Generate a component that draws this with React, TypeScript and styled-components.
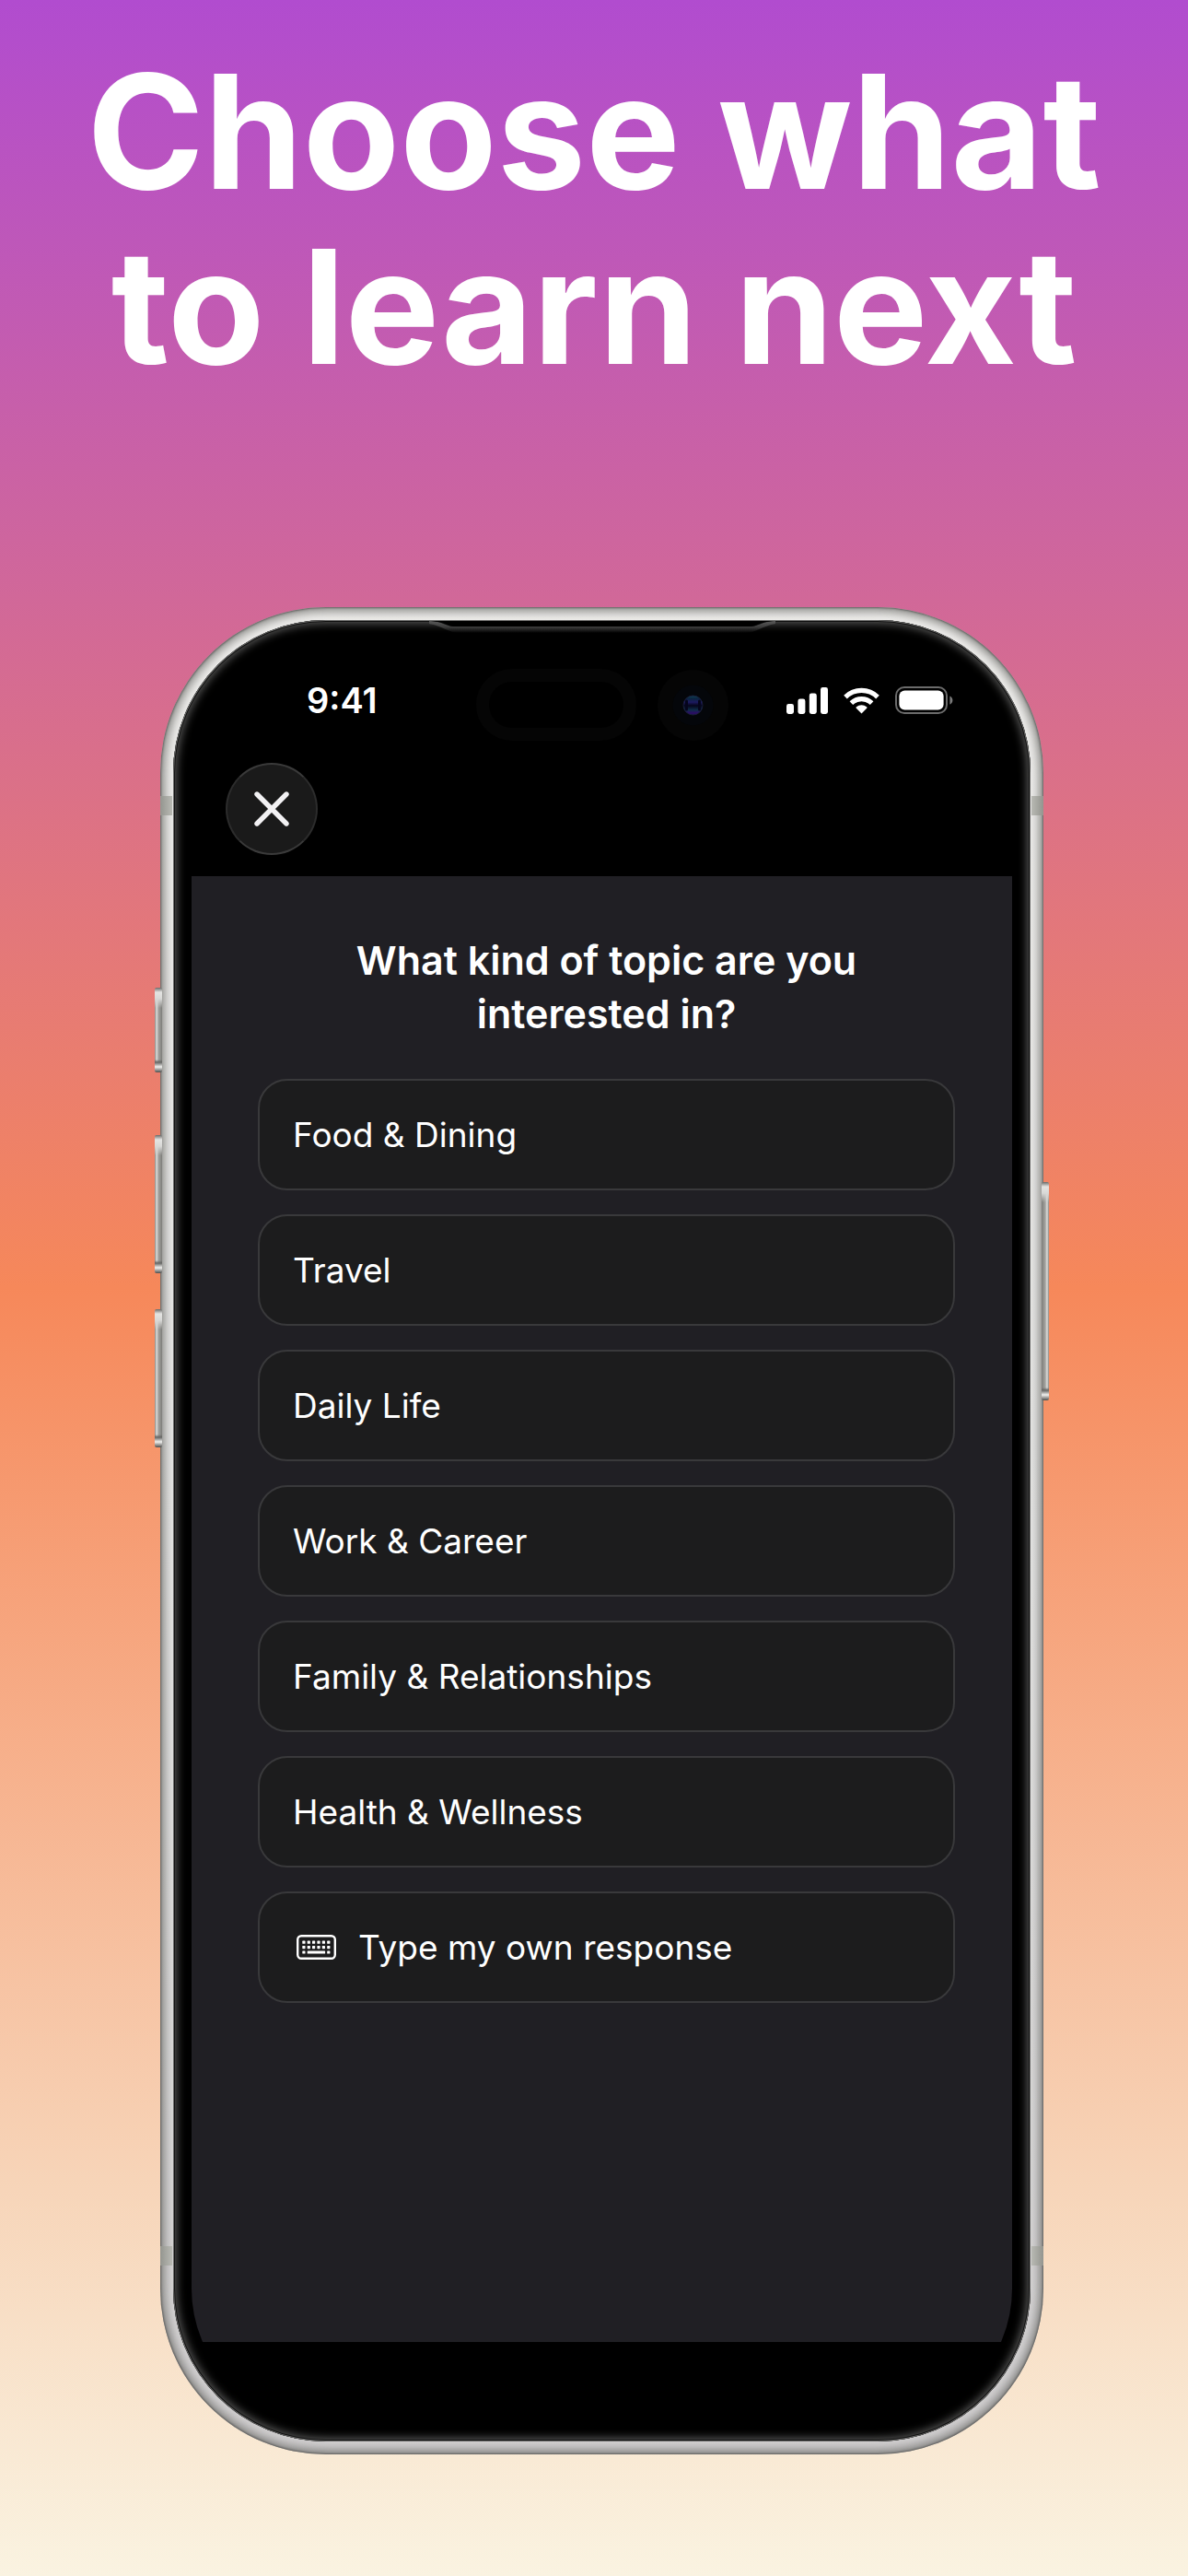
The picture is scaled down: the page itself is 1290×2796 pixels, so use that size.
import React from "react";
import styled, { createGlobalStyle } from "styled-components";

const GlobalStyle = createGlobalStyle`
  *, *::before, *::after { box-sizing: border-box; }
  html { background: #faf3e1; }
  body { margin: 0; }
  button { font: inherit; color: inherit; cursor: pointer; }
`;

const FONT = `Inter, "Liberation Sans", Arial, sans-serif`;

const Page = styled.main`
  display: flex;
  flex-direction: column;
  align-items: center;
  gap: 232px;
  min-height: 100vh;
  padding: 47px 40px 132px;
  overflow: hidden;
  font-family: ${FONT};
  color: #ffffff;
  background: linear-gradient(180deg, #b14ccf 0%, #f6885a 50%, #f7d5b9 85%, #faf3e1 100%);
`;

const Headline = styled.h1`
  margin: 0;
  max-width: 1200px;
  font-size: 172px;
  line-height: 190px;
  font-weight: 700;
  text-align: center;
`;

const Stage = styled.div`
  width: 100%;
  max-width: 976px;
  padding-left: 17px;
`;

const Device = styled.section`
  position: relative;
  width: 100%;
  padding: 14px;
  border-radius: 180px;
  background: linear-gradient(180deg, #f0efed 0%, #e6e6e5 50%, #d2d0d1 100%);
  box-shadow:
    inset 0 0 2px 1px rgba(80, 80, 78, 0.7),
    inset 0 0 12px 4px rgba(96, 96, 92, 0.8);
`;

const Bezel = styled.div`
  position: relative;
  padding: 20px;
  border-radius: 166px;
  background: #000000;
  box-shadow:
    inset 0 0 0 1px #6c6c6b,
    inset 0 0 0 2px #121212,
    inset 0 0 10px 4px #565655;
`;

const Screen = styled.div`
  position: relative;
  overflow: hidden;
  padding-bottom: 88px;
  border-radius: 146px;
  background: #000000;
`;

const SideKey = styled.span<{ $side: "left" | "right"; $top: number; $length: number }>`
  position: absolute;
  top: ${(p) => p.$top}px;
  ${(p) => p.$side}: -6px;
  width: 8px;
  height: ${(p) => p.$length}px;
  border-radius: 2px;
  background:
    linear-gradient(180deg, #6b6b69 0, #e4e4e2 5px, #d8d8d6 12px, transparent 22px, transparent calc(100% - 14px), #666664 calc(100% - 11px), #f0f0ee calc(100% - 6px), #4c4c4a 100%),
    linear-gradient(${(p) => (p.$side === "left" ? "90deg" : "270deg")}, #83837f 0, #dededc 2px, #a3a39f 4px, #7d7d7a 8px);
`;

const Antenna = styled.span<{ $side: "left" | "right"; $edge: "top" | "bottom" }>`
  position: absolute;
  ${(p) => p.$side}: 0;
  ${(p) => p.$edge}: 205px;
  width: 13px;
  height: 21px;
  background: linear-gradient(${(p) => (p.$side === "left" ? "90deg" : "270deg")}, #94958f, #b8b9b3);
`;

const Earpiece = styled.svg`
  position: absolute;
  top: 0;
  left: 50%;
  width: 376px;
  height: 14px;
  margin-left: -188px;
`;

const SensorIsland = styled.div`
  position: absolute;
  top: 33px;
  left: 50%;
  display: flex;
  align-items: center;
  gap: 23px;
  margin-left: -137px;
`;

const Pill = styled.span`
  width: 174px;
  height: 78px;
  border: 14px solid #050505;
  border-radius: 39px;
`;

const Camera = styled.svg`
  width: 77px;
  height: 77px;
`;

const StatusBar = styled.div`
  position: relative;
  display: flex;
  align-items: center;
  justify-content: space-between;
  height: 134px;
  padding: 0 64px 0 125px;
`;

const Clock = styled.time`
  font-size: 38px;
  line-height: 46px;
  font-weight: 600;
`;

const Indicators = styled.div`
  display: flex;
  align-items: center;
  gap: 17px;
`;

const NavBar = styled.header`
  padding: 1px 37px 23px;
`;

const CloseButton = styled.button`
  display: grid;
  place-items: center;
  width: 100px;
  height: 100px;
  padding: 0;
  border: 2px solid #2c2c2c;
  border-top-color: #3a3a3a;
  border-bottom-color: #3a3a3a;
  border-radius: 50%;
  background: #1a1a1a;
`;

const Panel = styled.div`
  display: flex;
  flex-direction: column;
  gap: 42px;
  min-height: 1591px;
  padding: 62px 62px 62px 72px;
  background: #201f24;
`;

const Question = styled.h2`
  align-self: center;
  max-width: 600px;
  margin: 0;
  font-size: 43px;
  line-height: 58px;
  font-weight: 600;
  text-align: center;
`;

const Options = styled.ul`
  display: flex;
  flex-direction: column;
  gap: 26px;
  margin: 0;
  padding: 0;
  list-style: none;
`;

const Option = styled.button`
  display: flex;
  align-items: center;
  gap: 24px;
  width: 100%;
  height: 121px;
  padding: 0 36px;
  border: 2px solid #39393b;
  border-radius: 32px;
  background: #1c1c1d;
  font-size: 37px;
  line-height: 46px;
  font-weight: 400;
  text-align: left;
`;

const KeyboardBox = styled.span`
  display: flex;
  padding-left: 4px;
`;

const SignalIcon = () => (
  <svg width="45" height="29" viewBox="0 0 45 29" fill="#fff" aria-hidden="true">
    <rect x="0" y="18" width="8" height="11" rx="2.4" />
    <rect x="12.4" y="12.6" width="8" height="16.4" rx="2.4" />
    <rect x="24.8" y="6.6" width="8" height="22.4" rx="2.4" />
    <rect x="37" y="0" width="8" height="29" rx="2.4" />
  </svg>
);

const WifiIcon = () => (
  <svg width="39" height="29" viewBox="0 0 39 29" aria-hidden="true">
    <g fill="none" stroke="#fff" strokeWidth="5.2">
      <path d="M2 10.6a25 25 0 0 1 35 0" />
      <path d="M8.4 17.2a16 16 0 0 1 22.2 0" />
    </g>
    <path d="M19.5 28.6 13.8 22.8a1 1 0 0 1 .1-1.5 8.8 8.8 0 0 1 11.2 0 1 1 0 0 1 .1 1.5Z" fill="#fff" />
  </svg>
);

const BatteryIcon = () => (
  <svg width="63" height="30" viewBox="0 0 63 30" aria-hidden="true">
    <rect x="1" y="1" width="55" height="28" rx="9" fill="none" stroke="#6b6b6b" strokeWidth="2" />
    <rect x="4.4" y="4.4" width="48.2" height="21.2" rx="6" fill="#fff" />
    <path d="M59.4 10.4c4 1.6 4 7.6 0 9.2Z" fill="#7a7a7a" />
  </svg>
);

const CloseIcon = () => (
  <svg width="38" height="38" viewBox="0 0 38 38" fill="none" stroke="#f2f1f3" strokeWidth="5.4" strokeLinecap="round" aria-hidden="true">
    <path d="M3 3l32 32M35 3 3 35" />
  </svg>
);

const KeyboardIcon = () => {
  const columns = [6.3, 11.7, 17, 22.4, 27.8, 33.2];
  return (
    <svg width="43" height="27" viewBox="0 0 43 27" fill="#fff" aria-hidden="true">
      <rect x="1.2" y="1.2" width="40.6" height="24.6" rx="4" fill="none" stroke="#fff" strokeWidth="2.4" />
      {[6.6, 12].map((y) =>
        columns.map((x) => <rect key={`${x}-${y}`} x={x} y={y} width="3.2" height="3.2" rx="0.6" />)
      )}
      <rect x="6.3" y="17.4" width="3.2" height="3.2" rx="0.6" />
      <rect x="11.7" y="17.4" width="19.4" height="3.2" rx="0.6" />
      <rect x="33.2" y="17.4" width="3.2" height="3.2" rx="0.6" />
    </svg>
  );
};

const CameraLens = () => (
  <Camera viewBox="0 0 77 77" aria-hidden="true">
    <defs>
      <linearGradient id="lens" x1="0" y1="0" x2="0" y2="1">
        <stop offset="0" stopColor="#0e4254" />
        <stop offset="0.16" stopColor="#0b2440" />
        <stop offset="0.34" stopColor="#1d1a60" />
        <stop offset="0.52" stopColor="#05051a" />
        <stop offset="0.74" stopColor="#0e2c48" />
        <stop offset="0.9" stopColor="#2c0c66" />
        <stop offset="1" stopColor="#221250" />
      </linearGradient>
    </defs>
    <circle cx="38.5" cy="38.5" r="38.5" fill="#050505" />
    <circle cx="38.5" cy="38.5" r="22" fill="#04060a" />
    <circle cx="38.5" cy="38.5" r="10.5" fill="url(#lens)" stroke="#1a1e3a" strokeWidth="1" />
    <path d="M31.5 34v9M45.5 34v9" stroke="#05051c" strokeWidth="3" strokeLinecap="round" />
  </Camera>
);

const EarpieceSlot = () => (
  <Earpiece viewBox="0 0 376 14" aria-hidden="true">
    <defs>
      <linearGradient id="lip" x1="0" y1="0" x2="0" y2="1">
        <stop offset="0" stopColor="#5a5a5a" />
        <stop offset="0.5" stopColor="#3c3c3c" />
        <stop offset="1" stopColor="#000000" />
      </linearGradient>
    </defs>
    <path d="M0 1C16 2 18 7 28 7H348C358 7 360 2 376 1L376 4C362 6 356 14 342 14H34C20 14 14 6 0 4Z" fill="url(#lip)" />
    <path d="M0 1C16 1 18 7 28 7H348C358 7 360 1 376 1Z" fill="#000" />
  </Earpiece>
);

const TOPICS = [
  "Food & Dining",
  "Travel",
  "Daily Life",
  "Work & Career",
  "Family & Relationships",
  "Health & Wellness",
];

export default function App() {
  return (
    <>
      <GlobalStyle />
      <Page>
        <Headline>
          Choose what
          <br />
          to learn next
        </Headline>
        <Stage>
          <Device>
            <SideKey $side="left" $top={413} $length={92} />
            <SideKey $side="left" $top={573} $length={150} />
            <SideKey $side="left" $top={762} $length={150} />
            <SideKey $side="right" $top={624} $length={237} />
            <Antenna $side="left" $edge="top" />
            <Antenna $side="right" $edge="top" />
            <Antenna $side="left" $edge="bottom" />
            <Antenna $side="right" $edge="bottom" />
            <Bezel>
              <EarpieceSlot />
              <Screen>
                <SensorIsland>
                  <Pill />
                  <CameraLens />
                </SensorIsland>
                <StatusBar>
                  <Clock>9:41</Clock>
                  <Indicators>
                    <SignalIcon />
                    <WifiIcon />
                    <BatteryIcon />
                  </Indicators>
                </StatusBar>
                <NavBar>
                  <CloseButton type="button" aria-label="Close">
                    <CloseIcon />
                  </CloseButton>
                </NavBar>
                <Panel>
                  <Question>What kind of topic are you interested in?</Question>
                  <Options>
                    {TOPICS.map((topic) => (
                      <li key={topic}>
                        <Option type="button">{topic}</Option>
                      </li>
                    ))}
                    <li>
                      <Option type="button">
                        <KeyboardBox>
                          <KeyboardIcon />
                        </KeyboardBox>
                        Type my own response
                      </Option>
                    </li>
                  </Options>
                </Panel>
              </Screen>
            </Bezel>
          </Device>
        </Stage>
      </Page>
    </>
  );
}
